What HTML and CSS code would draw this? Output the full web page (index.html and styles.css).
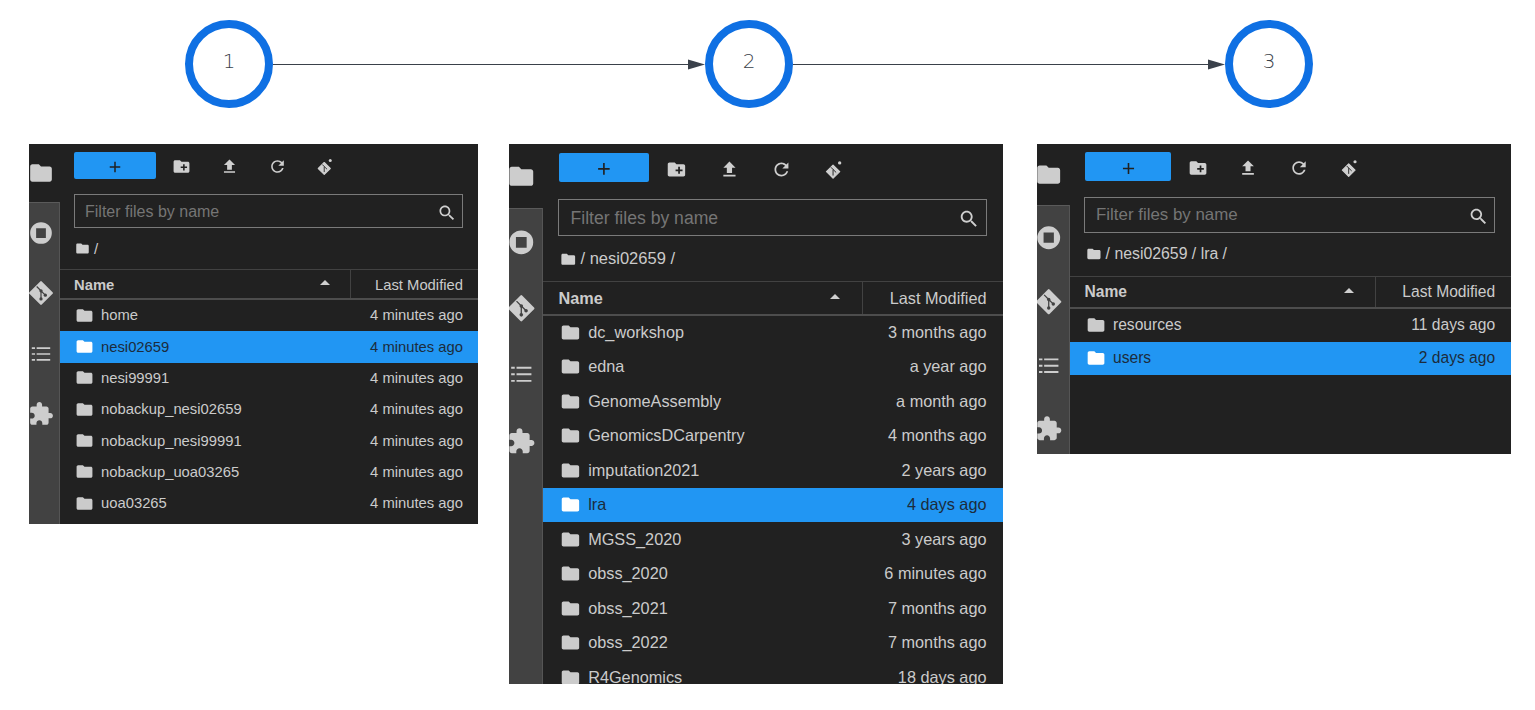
FILE: index.html
```html
<!DOCTYPE html>
<html lang="en">
<head>
<meta charset="utf-8">
<title>File browser navigation</title>
<link rel="stylesheet" href="styles.css">
</head>
<body>
<svg class="defs" aria-hidden="true">
  <symbol id="i-folder" viewBox="0 0 24 24"><path d="M10 4H4c-1.1 0-1.99.9-1.99 2L2 18c0 1.1.9 2 2 2h16c1.1 0 2-.9 2-2V8c0-1.1-.9-2-2-2h-8l-2-2z"/></symbol>
  <symbol id="i-stop" viewBox="0 0 24 24"><path fill-rule="evenodd" d="M12 2a10 10 0 1 0 0 20 10 10 0 0 0 0-20zM7.500 7.500h9v9h-9z"/></symbol>
  <symbol id="i-git" viewBox="0 0 24 24"><path stroke="#cdcdcd" stroke-width="2" stroke-linejoin="round" d="M12 2 22 12 12 22 2 12z"/><path fill="none" stroke="#424242" stroke-width="1.100" d="M8 6 12 10V18M12 10 16.500 14.500"/><circle fill="#424242" cx="12" cy="10" r="1.500"/><circle fill="#424242" cx="12" cy="17.500" r="1.500"/><circle fill="#424242" cx="16" cy="14" r="1.500"/></symbol>
  <symbol id="i-list" viewBox="0 0 24 24"><path d="M3.500 5.700h3v1.600h-3zM8 5.700h12.500v1.600H8zM3.500 11.200h3v1.600h-3zM8 11.200h12.500v1.600H8zM3.500 16.700h3v1.600h-3zM8 16.700h12.500v1.600H8z"/></symbol>
  <symbol id="i-ext" viewBox="0 0 24 24"><path d="M20.5 11H19V7c0-1.1-.9-2-2-2h-4V3.500C13 2.120 11.880 1 10.500 1S8 2.120 8 3.500V5H4c-1.100 0-1.990.9-1.990 2v3.800H3.500c1.490 0 2.700 1.210 2.700 2.700s-1.210 2.700-2.700 2.700H2V20c0 1.100.9 2 2 2h3.800v-1.500c0-1.490 1.210-2.700 2.700-2.700 1.490 0 2.700 1.210 2.700 2.700V22H17c1.100 0 2-.9 2-2v-4h1.500c1.380 0 2.500-1.120 2.500-2.500S21.880 11 20.500 11z"/></symbol>
  <symbol id="i-plus" viewBox="0 0 24 24"><path d="M19 13h-6v6h-2v-6H5v-2h6V5h2v6h6v2z"/></symbol>
  <symbol id="i-newfolder" viewBox="0 0 24 24"><path d="M20 6h-8l-2-2H4c-1.110 0-1.990.89-1.990 2L2 18c0 1.110.89 2 2 2h16c1.110 0 2-.89 2-2V8c0-1.110-.89-2-2-2zm-1 8h-3v3h-2v-3h-3v-2h3V9h2v3h3v2z"/></symbol>
  <symbol id="i-upload" viewBox="0 0 24 24"><path d="M9 16h6v-6h4l-7-7-7 7h4zm-4 2h14v2H5z"/></symbol>
  <symbol id="i-refresh" viewBox="0 0 24 24"><path d="M17.650 6.350C16.200 4.900 14.210 4 12 4c-4.420 0-7.990 3.580-7.990 8s3.570 8 7.990 8c3.730 0 6.840-2.550 7.730-6h-2.080c-.82 2.330-3.040 4-5.650 4-3.310 0-6-2.690-6-6s2.690-6 6-6c1.660 0 3.140.69 4.220 1.780L13 11h7V4l-2.350 2.350z"/></symbol>
  <symbol id="i-gitclone" viewBox="0 0 24 24"><circle cx="18" cy="4.500" r="1.900"/><path stroke="#cfcfcf" stroke-width="1.500" stroke-linejoin="round" d="M10.400 7 18 14.500 10.400 22 2.900 14.500z"/><path fill="none" stroke="#212121" stroke-width="1.100" d="M8 9.500 10.400 12V19M10.400 12 14 15.500"/></symbol>
  <symbol id="i-search" viewBox="0 0 24 24"><path d="M15.500 14h-.79l-.28-.27C15.410 12.590 16 11.110 16 9.500 16 5.910 13.090 3 9.500 3S3 5.910 3 9.500 5.910 16 9.500 16c1.610 0 3.090-.59 4.230-1.570l.27.28v.79l5 4.990L20.490 19l-4.990-5zm-6 0C7.010 14 5 11.990 5 9.500S7.010 5 9.500 5 14 7.010 14 9.500 11.990 14 9.500 14z"/></symbol>
</svg>

<main class="page">
  <section class="flow">
    <div class="node">1</div>
    <svg class="arrow" viewBox="0 0 432 16"><path class="arrow-line" d="M0 8.500H416"/><path class="arrow-head" d="M415 3.500 432 8.500 415 13.500z"/></svg>
    <div class="node">2</div>
    <svg class="arrow" viewBox="0 0 432 16"><path class="arrow-line" d="M0 8.500H416"/><path class="arrow-head" d="M415 3.500 432 8.500 415 13.500z"/></svg>
    <div class="node">3</div>
  </section>

  <section class="panels">
    <article class="panel p1">
      <aside class="side">
        <div class="tab tab-first"><svg class="side-icon"><use href="#i-folder"/></svg></div>
        <div class="rail">
          <div class="tab"><svg class="side-icon"><use href="#i-stop"/></svg></div>
          <div class="tab"><svg class="side-icon"><use href="#i-git"/></svg></div>
          <div class="tab"><svg class="side-icon"><use href="#i-list"/></svg></div>
          <div class="tab"><svg class="side-icon"><use href="#i-ext"/></svg></div>
        </div>
      </aside>
      <div class="main">
        <div class="toolbar">
          <button class="add"><svg class="plus"><use href="#i-plus"/></svg></button>
          <span class="tool"><svg class="tool-icon"><use href="#i-newfolder"/></svg></span>
          <span class="tool"><svg class="tool-icon"><use href="#i-upload"/></svg></span>
          <span class="tool"><svg class="tool-icon"><use href="#i-refresh"/></svg></span>
          <span class="tool"><svg class="tool-icon"><use href="#i-gitclone"/></svg></span>
        </div>
        <div class="filter"><span class="ph">Filter files by name</span><svg class="search"><use href="#i-search"/></svg></div>
        <div class="crumbs"><svg class="crumb-icon"><use href="#i-folder"/></svg><span>/</span></div>
        <div class="head"><span class="h-name">Name<i class="caret"></i></span><span class="h-mod">Last Modified</span></div>
        <ul class="rows">
          <li class="row"><svg class="row-icon"><use href="#i-folder"/></svg><span class="nm">home</span><span class="tm">4 minutes ago</span></li>
          <li class="row sel"><svg class="row-icon"><use href="#i-folder"/></svg><span class="nm">nesi02659</span><span class="tm">4 minutes ago</span></li>
          <li class="row"><svg class="row-icon"><use href="#i-folder"/></svg><span class="nm">nesi99991</span><span class="tm">4 minutes ago</span></li>
          <li class="row"><svg class="row-icon"><use href="#i-folder"/></svg><span class="nm">nobackup_nesi02659</span><span class="tm">4 minutes ago</span></li>
          <li class="row"><svg class="row-icon"><use href="#i-folder"/></svg><span class="nm">nobackup_nesi99991</span><span class="tm">4 minutes ago</span></li>
          <li class="row"><svg class="row-icon"><use href="#i-folder"/></svg><span class="nm">nobackup_uoa03265</span><span class="tm">4 minutes ago</span></li>
          <li class="row"><svg class="row-icon"><use href="#i-folder"/></svg><span class="nm">uoa03265</span><span class="tm">4 minutes ago</span></li>
        </ul>
      </div>
    </article>

    <article class="panel p2">
      <aside class="side">
        <div class="tab tab-first"><svg class="side-icon"><use href="#i-folder"/></svg></div>
        <div class="rail">
          <div class="tab"><svg class="side-icon"><use href="#i-stop"/></svg></div>
          <div class="tab"><svg class="side-icon"><use href="#i-git"/></svg></div>
          <div class="tab"><svg class="side-icon"><use href="#i-list"/></svg></div>
          <div class="tab"><svg class="side-icon"><use href="#i-ext"/></svg></div>
        </div>
      </aside>
      <div class="main">
        <div class="toolbar">
          <button class="add"><svg class="plus"><use href="#i-plus"/></svg></button>
          <span class="tool"><svg class="tool-icon"><use href="#i-newfolder"/></svg></span>
          <span class="tool"><svg class="tool-icon"><use href="#i-upload"/></svg></span>
          <span class="tool"><svg class="tool-icon"><use href="#i-refresh"/></svg></span>
          <span class="tool"><svg class="tool-icon"><use href="#i-gitclone"/></svg></span>
        </div>
        <div class="filter"><span class="ph">Filter files by name</span><svg class="search"><use href="#i-search"/></svg></div>
        <div class="crumbs"><svg class="crumb-icon"><use href="#i-folder"/></svg><span>/ nesi02659 /</span></div>
        <div class="head"><span class="h-name">Name<i class="caret"></i></span><span class="h-mod">Last Modified</span></div>
        <ul class="rows">
          <li class="row"><svg class="row-icon"><use href="#i-folder"/></svg><span class="nm">dc_workshop</span><span class="tm">3 months ago</span></li>
          <li class="row"><svg class="row-icon"><use href="#i-folder"/></svg><span class="nm">edna</span><span class="tm">a year ago</span></li>
          <li class="row"><svg class="row-icon"><use href="#i-folder"/></svg><span class="nm">GenomeAssembly</span><span class="tm">a month ago</span></li>
          <li class="row"><svg class="row-icon"><use href="#i-folder"/></svg><span class="nm">GenomicsDCarpentry</span><span class="tm">4 months ago</span></li>
          <li class="row"><svg class="row-icon"><use href="#i-folder"/></svg><span class="nm">imputation2021</span><span class="tm">2 years ago</span></li>
          <li class="row sel"><svg class="row-icon"><use href="#i-folder"/></svg><span class="nm">lra</span><span class="tm">4 days ago</span></li>
          <li class="row"><svg class="row-icon"><use href="#i-folder"/></svg><span class="nm">MGSS_2020</span><span class="tm">3 years ago</span></li>
          <li class="row"><svg class="row-icon"><use href="#i-folder"/></svg><span class="nm">obss_2020</span><span class="tm">6 minutes ago</span></li>
          <li class="row"><svg class="row-icon"><use href="#i-folder"/></svg><span class="nm">obss_2021</span><span class="tm">7 months ago</span></li>
          <li class="row"><svg class="row-icon"><use href="#i-folder"/></svg><span class="nm">obss_2022</span><span class="tm">7 months ago</span></li>
          <li class="row"><svg class="row-icon"><use href="#i-folder"/></svg><span class="nm">R4Genomics</span><span class="tm">18 days ago</span></li>
        </ul>
      </div>
    </article>

    <article class="panel p3">
      <aside class="side">
        <div class="tab tab-first"><svg class="side-icon"><use href="#i-folder"/></svg></div>
        <div class="rail">
          <div class="tab"><svg class="side-icon"><use href="#i-stop"/></svg></div>
          <div class="tab"><svg class="side-icon"><use href="#i-git"/></svg></div>
          <div class="tab"><svg class="side-icon"><use href="#i-list"/></svg></div>
          <div class="tab"><svg class="side-icon"><use href="#i-ext"/></svg></div>
        </div>
      </aside>
      <div class="main">
        <div class="toolbar">
          <button class="add"><svg class="plus"><use href="#i-plus"/></svg></button>
          <span class="tool"><svg class="tool-icon"><use href="#i-newfolder"/></svg></span>
          <span class="tool"><svg class="tool-icon"><use href="#i-upload"/></svg></span>
          <span class="tool"><svg class="tool-icon"><use href="#i-refresh"/></svg></span>
          <span class="tool"><svg class="tool-icon"><use href="#i-gitclone"/></svg></span>
        </div>
        <div class="filter"><span class="ph">Filter files by name</span><svg class="search"><use href="#i-search"/></svg></div>
        <div class="crumbs"><svg class="crumb-icon"><use href="#i-folder"/></svg><span>/ nesi02659 / lra /</span></div>
        <div class="head"><span class="h-name">Name<i class="caret"></i></span><span class="h-mod">Last Modified</span></div>
        <ul class="rows">
          <li class="row"><svg class="row-icon"><use href="#i-folder"/></svg><span class="nm">resources</span><span class="tm">11 days ago</span></li>
          <li class="row sel"><svg class="row-icon"><use href="#i-folder"/></svg><span class="nm">users</span><span class="tm">2 days ago</span></li>
        </ul>
      </div>
    </article>
  </section>
</main>
</body>
</html>
```
FILE: styles.css
```css
* { box-sizing: border-box; }
html, body { margin: 0; background: #fff; }
.defs { display: none; }
.page { width: 1535px; height: 710px; overflow: hidden; font-family: "Liberation Sans", Arial, sans-serif; }

/* step diagram */
.flow { height: 144px; padding: 20px 0 0 185px; display: flex; align-items: flex-start; }
.node {
  width: 88px; height: 88px; border: 8px solid #0f70e3; border-radius: 50%;
  display: flex; align-items: center; justify-content: center;
  padding-bottom: 6px;
  font-family: "DejaVu Sans", sans-serif; font-weight: 200; font-size: 20px; color: #3a414a; background: #fff;
}
.arrow { width: 432px; height: 16px; margin-top: 36px; flex: none; }
.arrow-line { stroke: #3a414a; stroke-width: 1; fill: none; }
.arrow-head { fill: #3a414a; }

/* file browser panels */
.panels { display: flex; align-items: flex-start; padding-left: 29px; }
.panel {
  --u: 1px;
  display: flex; overflow: hidden; background: #212121; color: #cbcbcb;
  font-size: calc(14.8 * var(--u));
}
.p1 { width: 449px; height: 380px; }
.p2 { --u: 1.1px; width: 494px; height: 540px; margin-left: 31px; }
.p3 { --u: 1.0557px; width: 474px; height: 310px; margin-left: 34px; }

.side { width: calc(31 * var(--u)); flex: none; display: flex; flex-direction: column; }
.rail { flex: 1; background: #424242; border-top: 1px solid #5a5a5a; border-right: 1px solid #555; }
.tab { height: calc(60.3 * var(--u)); flex: none; display: flex; align-items: center; padding-left: calc(-1.5 * var(--u) + 0px); }
.tab-first { height: calc(58 * var(--u)); }
.side-icon { width: calc(26 * var(--u)); height: calc(26 * var(--u)); fill: #cdcdcd; flex: none; margin-left: calc(-1.5 * var(--u)); }

.main { flex: 1; min-width: 0; display: flex; flex-direction: column; }
.toolbar { flex: none; display: flex; align-items: center; padding: calc(8 * var(--u)) 0 0 calc(14.3 * var(--u)); }
.add {
  width: calc(82 * var(--u)); height: calc(27 * var(--u)); border: 0; padding: calc(2.5 * var(--u)) 0 0; border-radius: 2px;
  background: #2196f3; display: flex; align-items: center; justify-content: center; margin-right: calc(.8 * var(--u));
}
.plus { width: calc(18 * var(--u)); height: calc(18 * var(--u)); fill: #212121; }
.tool { width: calc(48 * var(--u)); padding-top: calc(2.5 * var(--u)); display: flex; justify-content: center; }
.tool-icon { width: calc(19 * var(--u)); height: calc(19 * var(--u)); fill: #cfcfcf; }

.filter {
  flex: none;
  margin: calc(15 * var(--u)) calc(15 * var(--u)) 0 calc(14 * var(--u));
  height: calc(34 * var(--u)); border: 1px solid #7a7a7a;
  display: flex; align-items: center; justify-content: space-between;
  padding: calc(1 * var(--u)) calc(5 * var(--u)) 0 calc(10 * var(--u));
}
.ph { color: #757575; font-size: calc(16 * var(--u)); }
.search { width: calc(20 * var(--u)); height: calc(20 * var(--u)); fill: #cfcfcf; margin-top: calc(2 * var(--u)); }

.crumbs {
  flex: none;
  height: calc(41 * var(--u)); display: flex; align-items: center;
  padding-left: calc(15 * var(--u)); gap: calc(4 * var(--u));
  font-size: calc(15 * var(--u));
}
.crumb-icon { width: calc(15 * var(--u)); height: calc(15 * var(--u)); fill: #cfcfcf; }

.head {
  height: calc(31 * var(--u)); flex: none; display: flex; align-items: stretch;
  border-top: 1px solid #424242; border-bottom: 2px solid #4d4d4d;
}
.h-name {
  flex: 1; display: flex; align-items: center; justify-content: space-between;
  padding: calc(1 * var(--u)) calc(20 * var(--u)) 0 calc(14 * var(--u)); font-weight: 700;
}
.caret {
  width: 0; height: 0; margin-bottom: calc(4 * var(--u));
  border-left: calc(5 * var(--u)) solid transparent; border-right: calc(5 * var(--u)) solid transparent;
  border-bottom: calc(5 * var(--u)) solid #cfcfcf;
}
.h-mod {
  width: calc(128.5 * var(--u)); border-left: 1px solid #424242; text-align: right;
  padding: calc(1 * var(--u)) calc(15 * var(--u)) 0 0; display: flex; align-items: center; justify-content: flex-end;
}
.rows { list-style: none; margin: 0; padding: 0; flex: none; }
.row {
  height: calc(31.35 * var(--u)); display: flex; align-items: center;
  padding: 0 calc(15 * var(--u)) calc(1 * var(--u)) calc(15.4 * var(--u));
}
.row-icon { width: calc(19 * var(--u)); height: calc(19 * var(--u)); fill: #cbcbcb; flex: none; margin-right: calc(6.6 * var(--u)); }
.nm { flex: 1; }
.sel { background: #2196f3; color: #1c2c3c; }
.sel .row-icon { fill: #fff; }
```
